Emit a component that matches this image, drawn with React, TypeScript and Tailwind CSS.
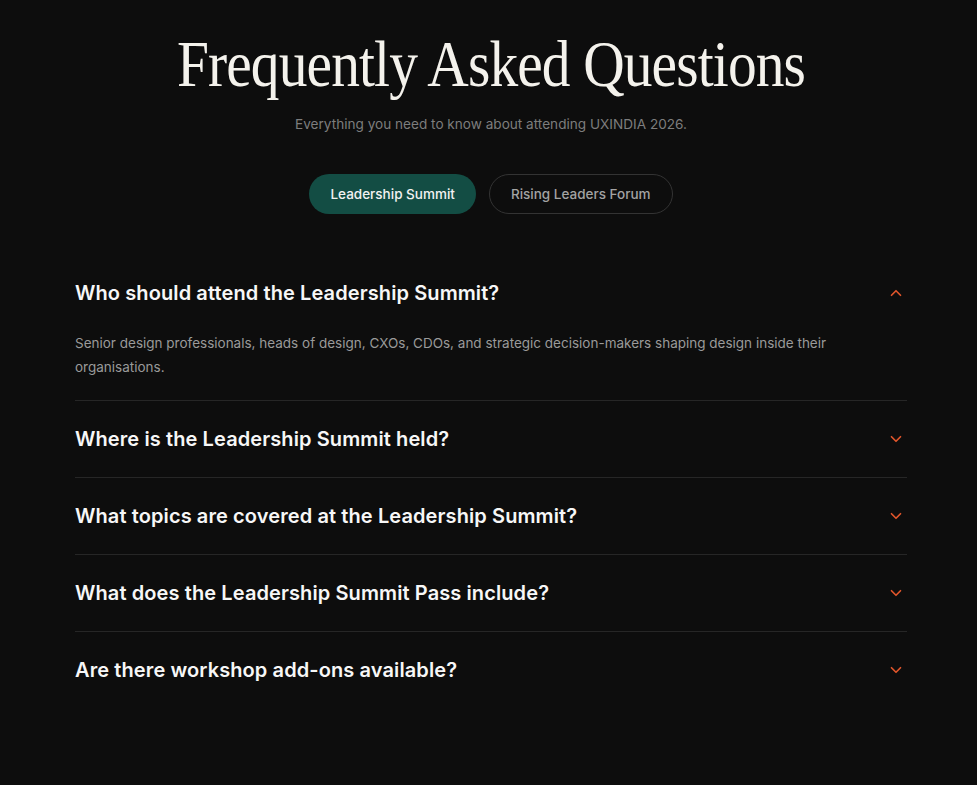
import { useState } from "react";
import { ChevronDown } from "lucide-react";

const faqs = [
  {
    q: "Who should attend the Leadership Summit?",
    a: "Senior design professionals, heads of design, CXOs, CDOs, and strategic decision-makers shaping design inside their organisations.",
  },
  { q: "Where is the Leadership Summit held?", a: "" },
  { q: "What topics are covered at the Leadership Summit?", a: "" },
  { q: "What does the Leadership Summit Pass include?", a: "" },
  { q: "Are there workshop add-ons available?", a: "" },
];

export default function App() {
  const [tab, setTab] = useState(0);
  const [open, setOpen] = useState(0);

  return (
    <div className="min-h-[785px] bg-[#0d0d0d] font-['Inter',sans-serif] text-white">
      <div className="ml-[75px] w-[832px] pt-[28px] pb-16">
        <h1 className="scale-x-[0.87] text-center font-['Liberation_Serif',serif] text-[66px] leading-[72px] tracking-[-1px] text-[#f4f2ec]">
          Frequently Asked Questions
        </h1>
        <p className="mt-[14px] text-center text-[13.6px] text-[#7d7d7d]">
          Everything you need to know about attending UXINDIA 2026.
        </p>

        <div className="mt-[40px] flex justify-center gap-[13px]">
          {["Leadership Summit", "Rising Leaders Forum"].map((t, i) => (
            <button
              key={t}
              type="button"
              onClick={() => setTab(i)}
              className={
                tab === i
                  ? "h-10 rounded-full bg-[#134d44] px-[21px] text-[13.5px] font-medium text-[#f2f2f2]"
                  : "h-10 rounded-full border border-[#333333] px-[21px] text-[13.5px] font-medium text-[#a3a3a3]"
              }
            >
              {t}
            </button>
          ))}
        </div>

        <div className="mt-[41px]">
          {faqs.map((f, i) => (
            <div key={f.q} className={i > 0 ? "border-t border-[#262626]" : ""}>
              <button
                type="button"
                onClick={() => setOpen(open === i ? -1 : i)}
                className="flex w-full items-center justify-between py-[25px] text-left"
              >
                <span className="text-[20px] leading-[26px] font-semibold tracking-[0.1px] text-[#f7f7f7]">
                  {f.q}
                </span>
                <ChevronDown
                  size={18}
                  strokeWidth={2.25}
                  className={
                    open === i
                      ? "mr-[2px] rotate-180 text-[#e0552b]"
                      : "mr-[2px] text-[#e0552b]"
                  }
                />
              </button>
              {open === i && f.a && (
                <p className="mt-0 pb-[21px] pr-16 text-[13.5px] leading-[24px] text-[#9a9a9a]">
                  {f.a}
                </p>
              )}
            </div>
          ))}
        </div>
      </div>
    </div>
  );
}
